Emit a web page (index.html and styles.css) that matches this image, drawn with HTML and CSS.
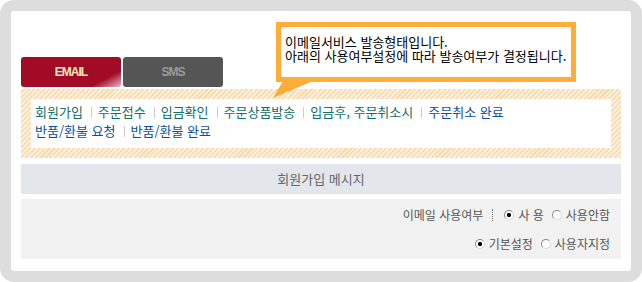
FILE: index.html
```html
<!DOCTYPE html>
<html lang="ko">
<head>
  <meta charset="UTF-8">
  <title>메일 발송 설정</title>
  <link rel="stylesheet" href="styles.css">
</head>
<body>

  <div class="frame">
    <div class="notice">
      <div class="notice-line">이메일서비스 발송형태입니다.</div>
      <div class="notice-line">아래의 사용여부설정에 따라 발송여부가 결정됩니다.</div>
    </div>
    <svg class="notice-tail" width="42" height="17" viewBox="0 0 42 17"><polygon points="10,0 40,0 0,17" fill="#ffac38"/></svg>

    <div class="tabs">
      <a class="tab tab-email">EMAIL</a>
      <a class="tab tab-sms">SMS</a>
    </div>

    <div class="menu-box">
      <div class="menu">
        <div class="menu-line">
          <a class="item">회원가입</a><span class="sep"></span><a class="item">주문접수</a><span class="sep"></span><a class="item">입금확인</a><span class="sep"></span><a class="item">주문상품발송</a><span class="sep"></span><a class="item">입금후, 주문취소시</a><span class="sep"></span><a class="item blue">주문취소 완료</a>
        </div>
        <div class="menu-line">
          <a class="item blue">반품/환불 요청</a><span class="sep"></span><a class="item blue">반품/환불 완료</a>
        </div>
      </div>
    </div>

    <div class="title-bar">회원가입 메시지</div>

    <div class="options">
      <div class="opt-row">
        <span class="label">이메일 사용여부</span>
        <span class="dots"></span>
        <span class="radio on"></span><span class="opt-text">사 용</span>
        <span class="radio"></span><span class="opt-text last">사용안함</span>
      </div>
      <div class="opt-row">
        <span class="radio on"></span><span class="opt-text">기본설정</span>
        <span class="radio"></span><span class="opt-text last">사용자지정</span>
      </div>
    </div>
  </div>

</body>
</html>
```

FILE: styles.css
```css
html, body {
  margin: 0px;
  padding: 0px;
  background-color: #fff;
}
.frame {
  position: relative;
  box-sizing: border-box;
  width: 642px;
  height: 282px;
  padding: 46px 10px 0px;
  border: 11px solid #dddddd;
  border-radius: 14px;
  font-family: "Noto Sans CJK KR", "Noto Sans", sans-serif;
  font-size: 13px;
}

/* speech bubble */
.notice {
  position: absolute;
  left: 265px;
  top: 11px;
  z-index: 2;
  box-sizing: border-box;
  width: 300px;
  height: 60px;
  padding: 8px 4px 0px;
  border: 5px solid #ffac38;
  background-color: #fff;
  color: #000;
  white-space: nowrap;
}
.notice-line {
  height: 14px;
  line-height: 14px;
}
.notice-tail {
  position: absolute;
  left: 262px;
  top: 70px;
  z-index: 2;
  display: block;
}

/* tabs */
.tabs {
  display: flex;
  gap: 2px;
}
.tab {
  width: 100px;
  height: 30px;
  line-height: 30px;
  border-radius: 3px;
  text-align: center;
  font-family: "Liberation Sans", Arial, sans-serif;
  font-size: 12px;
  font-weight: bold;
  letter-spacing: -1px;
  cursor: pointer;
}
.tab-email {
  background: linear-gradient(152deg, #a10b25 0%, #a10b25 80%, #e9b9c2 100%);
  color: #f9e9c4;
}
.tab-sms {
  background-color: #555555;
  color: #9a9a9a;
}

/* hatched menu box */
.menu-box {
  margin-top: 2px;
  padding: 10px;
  background: repeating-linear-gradient(135deg, #fdefd9 0px, #fdefd9 2px, #f7dbb0 2px, #f7dbb0 3.5px);
}
.menu {
  height: 49px;
  box-sizing: border-box;
  padding: 3px 4px 0px;
  background-color: #fff;
}
.menu-line {
  line-height: 19px;
  white-space: nowrap;
}
.item {
  color: #0f6e66;
  cursor: pointer;
}
.item.blue {
  color: #0b4f9e;
}
.sep {
  display: inline-block;
  width: 1px;
  height: 11px;
  margin: 0px 6px 0px 8px;
  background-color: #cccccc;
  vertical-align: -1px;
}

/* message title */
.title-bar {
  margin-top: 6px;
  height: 30px;
  line-height: 30px;
  background-color: #e3e6ea;
  color: #666;
  text-align: center;
}

/* options */
.options {
  margin-top: 5px;
  height: 60px;
  box-sizing: border-box;
  padding: 1px 11px 0px;
  background-color: #f2f2f2;
  color: #555;
  font-size: 12px;
}
.opt-row {
  display: flex;
  justify-content: flex-end;
  align-items: center;
  height: 29px;
}
.label {
  margin-right: 9px;
}
.dots {
  width: 0px;
  height: 12px;
  border-left: 1px dotted #777;
  margin-right: 11px;
}
.radio {
  display: inline-block;
  box-sizing: border-box;
  width: 10px;
  height: 10px;
  border-radius: 50%;
  border: 1px solid #888;
  border-right-color: #d8d8d8;
  border-bottom-color: #d8d8d8;
  background-color: #fff;
}
.radio.on {
  background: radial-gradient(circle, #000 0px, #000 1.8px, #fff 2.4px);
}
.opt-text {
  margin-left: 4px;
  margin-right: 8px;
}
.opt-text.last {
  margin-right: 0px;
}
```
